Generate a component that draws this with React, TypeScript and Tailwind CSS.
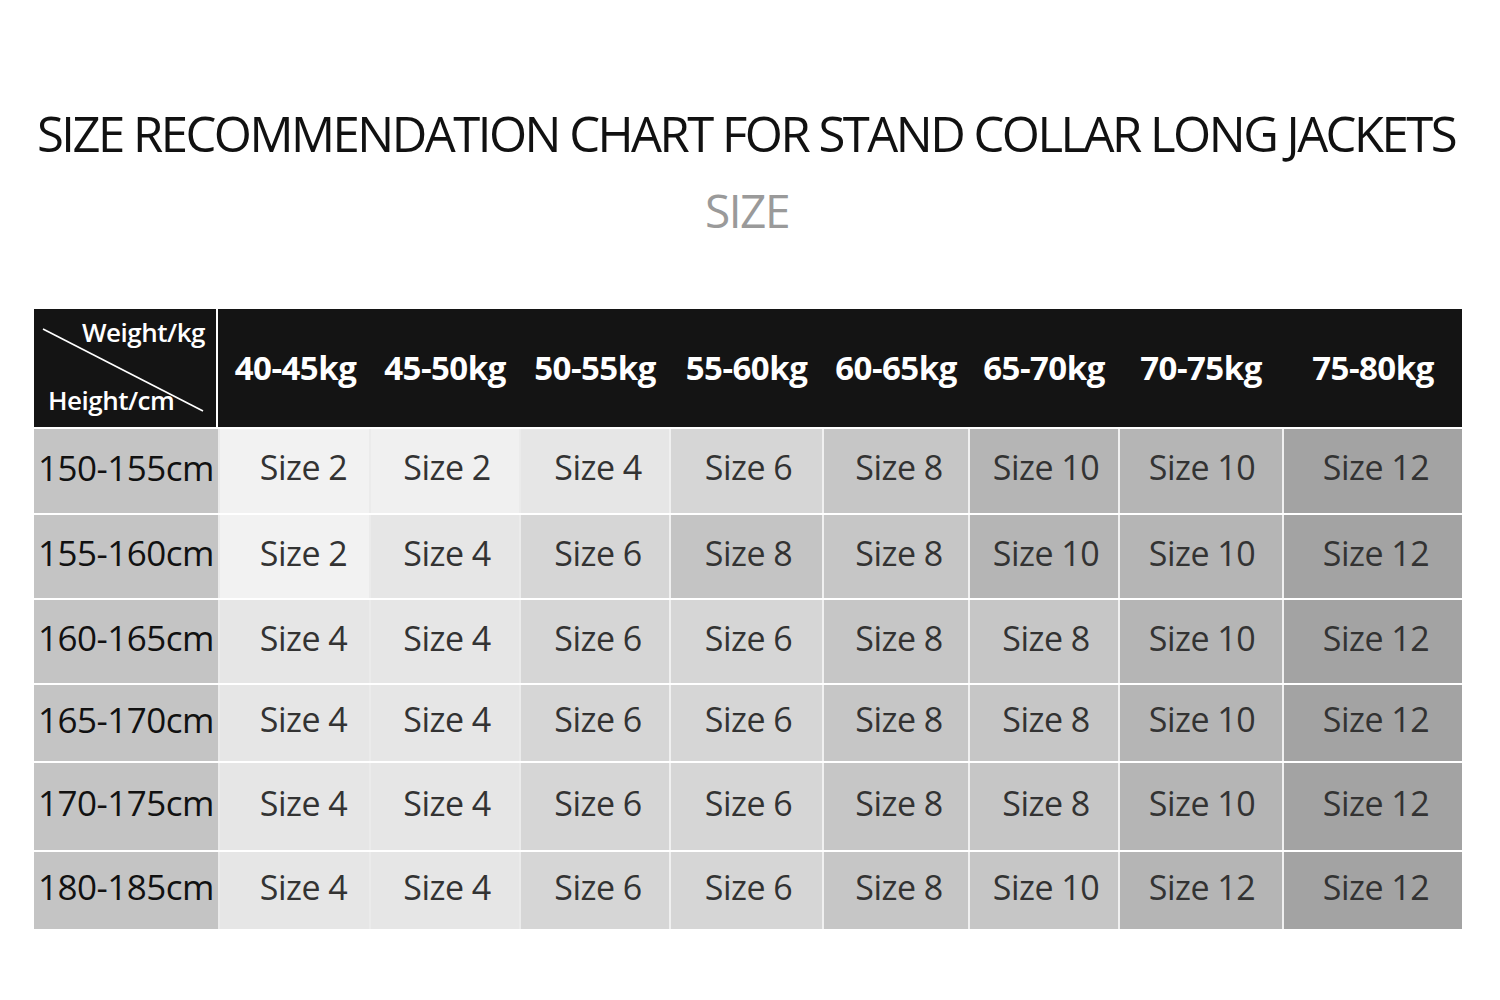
import React from "react";

type Cell = [string, string];
type Row = { label: string; h: string; cells: Cell[] };

const rows: Row[] = [
  {
    label: "150-155cm",
    h: "h-[86px]",
    cells: [
      ["Size 2", "bg-[#f2f2f2]"],
      ["Size 2", "bg-[#f0f0f0]"],
      ["Size 4", "bg-[#e6e6e6]"],
      ["Size 6", "bg-[#d6d6d6]"],
      ["Size 8", "bg-[#c6c6c6]"],
      ["Size 10", "bg-[#b5b5b5]"],
      ["Size 10", "bg-[#b5b5b5]"],
      ["Size 12", "bg-[#a3a3a3]"],
    ],
  },
  {
    label: "155-160cm",
    h: "h-[85px]",
    cells: [
      ["Size 2", "bg-[#f2f2f2]"],
      ["Size 4", "bg-[#e6e6e6]"],
      ["Size 6", "bg-[#d6d6d6]"],
      ["Size 8", "bg-[#c4c4c4]"],
      ["Size 8", "bg-[#c6c6c6]"],
      ["Size 10", "bg-[#b5b5b5]"],
      ["Size 10", "bg-[#b5b5b5]"],
      ["Size 12", "bg-[#a3a3a3]"],
    ],
  },
  {
    label: "160-165cm",
    h: "h-[85px]",
    cells: [
      ["Size 4", "bg-[#e6e6e6]"],
      ["Size 4", "bg-[#e6e6e6]"],
      ["Size 6", "bg-[#d6d6d6]"],
      ["Size 6", "bg-[#d6d6d6]"],
      ["Size 8", "bg-[#c6c6c6]"],
      ["Size 8", "bg-[#c6c6c6]"],
      ["Size 10", "bg-[#b5b5b5]"],
      ["Size 12", "bg-[#a3a3a3]"],
    ],
  },
  {
    label: "165-170cm",
    h: "h-[78px]",
    cells: [
      ["Size 4", "bg-[#e6e6e6]"],
      ["Size 4", "bg-[#e6e6e6]"],
      ["Size 6", "bg-[#d6d6d6]"],
      ["Size 6", "bg-[#d6d6d6]"],
      ["Size 8", "bg-[#c6c6c6]"],
      ["Size 8", "bg-[#c6c6c6]"],
      ["Size 10", "bg-[#b5b5b5]"],
      ["Size 12", "bg-[#a3a3a3]"],
    ],
  },
  {
    label: "170-175cm",
    h: "h-[89px]",
    cells: [
      ["Size 4", "bg-[#e6e6e6]"],
      ["Size 4", "bg-[#e6e6e6]"],
      ["Size 6", "bg-[#d6d6d6]"],
      ["Size 6", "bg-[#d6d6d6]"],
      ["Size 8", "bg-[#c6c6c6]"],
      ["Size 8", "bg-[#c6c6c6]"],
      ["Size 10", "bg-[#b5b5b5]"],
      ["Size 12", "bg-[#a3a3a3]"],
    ],
  },
  {
    label: "180-185cm",
    h: "h-[79px]",
    cells: [
      ["Size 4", "bg-[#e6e6e6]"],
      ["Size 4", "bg-[#e6e6e6]"],
      ["Size 6", "bg-[#d6d6d6]"],
      ["Size 6", "bg-[#d6d6d6]"],
      ["Size 8", "bg-[#c6c6c6]"],
      ["Size 10", "bg-[#c6c6c6]"],
      ["Size 12", "bg-[#b5b5b5]"],
      ["Size 12", "bg-[#a3a3a3]"],
    ],
  },
];

const colW = [
  "w-[151px]",
  "w-[150px]",
  "w-[150px]",
  "w-[153px]",
  "w-[146px]",
  "w-[150px]",
  "w-[164px]",
  "w-[180px]",
];

const colPad = [
  "pl-[18px]",
  "pl-[4px]",
  "pl-[6px]",
  "pl-[4px]",
  "pl-[6px]",
  "pl-[4px]",
  "pl-[2px]",
  "pl-[6px]",
];

const weights = [
  "40-45kg",
  "45-50kg",
  "50-55kg",
  "55-60kg",
  "60-65kg",
  "65-70kg",
  "70-75kg",
  "75-80kg",
];

export default function App() {
  return (
    <div className="w-[1500px] h-[1000px] bg-white font-['Open_Sans',sans-serif] overflow-hidden">
      <div className="pt-[109px] pr-[8px] text-center text-[49px] font-medium leading-none text-[#111] tracking-[-2.5px] whitespace-nowrap">
        SIZE RECOMMENDATION CHART FOR STAND COLLAR LONG JACKETS
      </div>
      <div className="mt-[29px] text-center text-[46px] font-medium leading-none text-[#9a9a9a] tracking-[-1.5px] pr-[6px]">
        SIZE
      </div>
      <div className="mt-[76px] ml-[34px] w-[1428px] flex flex-col">
        <div className="flex h-[118px] bg-[#141414]">
          <div className="relative w-[184px] shrink-0 border-r-2 border-white">
            <svg className="absolute left-0 top-0" width="184" height="118">
              <line x1="9" y1="20" x2="169" y2="102" stroke="white" strokeWidth="1.6" />
            </svg>
            <span className="absolute left-[48px] top-[10px] text-[26px] font-semibold text-white leading-none tracking-[-0.5px]">
              Weight/kg
            </span>
            <span className="absolute left-[14px] top-[78px] text-[26px] font-semibold text-white leading-none tracking-[-0.5px]">
              Height/cm
            </span>
          </div>
          {weights.map((w, i) => (
            <div
              key={w}
              className={`${i === 0 ? "w-[149px]" : colW[i]} shrink-0 flex items-center justify-center pb-[2px] pl-[6px] text-white font-bold text-[33px] leading-none tracking-[-0.5px]`}
            >
              {w}
            </div>
          ))}
        </div>
        {rows.map((r) => (
          <div key={r.label} className={`flex ${r.h} border-t-2 border-white`}>
            <div className="w-[184px] shrink-0 bg-[#c4c4c4] flex items-center pl-[4px] pb-[8px] text-[35px] leading-none text-[#111] tracking-[-0.5px]">
              {r.label}
            </div>
            {r.cells.map(([t, bg], i) => (
              <div
                key={i}
                className={`${colW[i]} ${bg} ${colPad[i]} shrink-0 border-l-2 ${i < 3 ? "border-[#ebebeb]" : "border-[#f0f0f0]"} flex items-center justify-center pb-[8px] text-[34px] leading-none text-[#333] tracking-[-0.5px]`}
              >
                {t}
              </div>
            ))}
          </div>
        ))}
      </div>
    </div>
  );
}
